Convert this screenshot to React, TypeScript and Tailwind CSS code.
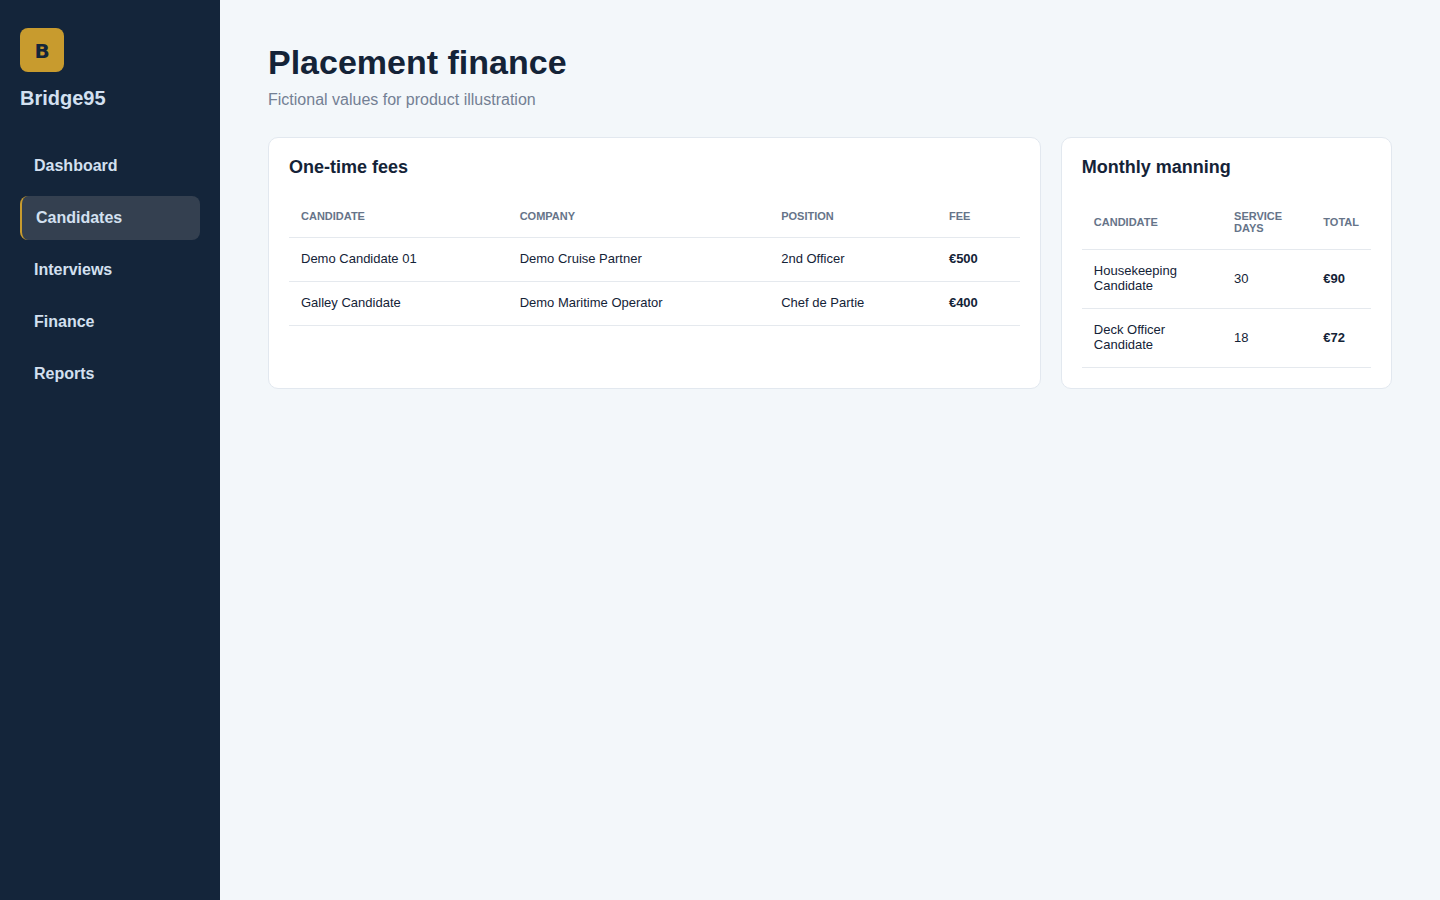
import type { ReactNode } from "react";

const navItems = ["Dashboard", "Candidates", "Interviews", "Finance", "Reports"];
const activeItem = "Candidates";

const feeColumns = ["Candidate", "Company", "Position", "Fee"];

const feeRows = [
  ["Demo Candidate 01", "Demo Cruise Partner", "2nd Officer", "€500"],
  ["Galley Candidate", "Demo Maritime Operator", "Chef de Partie", "€400"],
];

const manningColumns = ["Candidate", "Service days", "Total"];

const manningRows = [
  ["Housekeeping Candidate", "30", "€90"],
  ["Deck Officer Candidate", "18", "€72"],
];

function Card({ title, children }: { title: string; children: ReactNode }) {
  return (
    <section className="min-w-0 rounded-[10px] border border-[#e2e8ef] bg-white p-5">
      <h2 className="mb-5 text-[18px] leading-[19px] font-bold">{title}</h2>
      {children}
    </section>
  );
}

function DataTable({ label, columns, rows }: { label: string; columns: string[]; rows: string[][] }) {
  return (
    <table aria-label={label} className="w-full border-collapse text-left">
      <thead>
        <tr className="border-b border-[#e5e9ee]">
          {columns.map((column) => (
            <th
              key={column}
              scope="col"
              className="px-3 pt-[13px] pb-[15px] text-[11px] leading-3 font-bold text-[#667489] uppercase"
            >
              {column}
            </th>
          ))}
        </tr>
      </thead>
      <tbody>
        {rows.map((row) => (
          <tr key={row[0]} className="border-b border-[#e5e9ee]">
            {row.map((cell, index) => (
              <td key={columns[index]} className="px-3 pt-[13px] pb-[15px] text-[13px] leading-[15px]">
                {index === row.length - 1 ? <strong>{cell}</strong> : cell}
              </td>
            ))}
          </tr>
        ))}
      </tbody>
    </table>
  );
}

export default function App() {
  return (
    <div className="flex min-h-screen bg-[#f3f7fa] font-['Liberation_Sans',Arial,sans-serif] text-[#142337]">
      <aside className="w-[220px] shrink-0 bg-[#14253a] px-5 py-7 text-[#d3e0f0]">
        <div className="mb-[34px] flex flex-col gap-[14px]">
          <span className="flex size-11 items-center justify-center rounded-lg bg-[#c89b2e] pt-0.5 font-['DejaVu_Sans',sans-serif] text-[20px] leading-6 font-black text-[#14253a]">
            B
          </span>
          <strong className="text-[20px] leading-6">Bridge95</strong>
        </div>
        <nav aria-label="Main" className="flex flex-col gap-2">
          {navItems.map((item) => (
            <a
              key={item}
              href="#"
              aria-current={item === activeItem ? "page" : undefined}
              className={
                item === activeItem
                  ? "rounded-lg border-l-2 border-[#c89b2e] bg-[#344050] px-[14px] py-[13px] text-[16px] leading-[18px] font-bold"
                  : "rounded-lg px-[14px] py-[13px] text-[16px] leading-[18px] font-bold"
              }
            >
              {item}
            </a>
          ))}
        </nav>
      </aside>
      <main className="min-w-0 flex-1 px-12 py-[42px]">
        <header className="mb-7">
          <h1 className="text-[34px] leading-10 font-bold">Placement finance</h1>
          <p className="mt-2 text-[16px] leading-[19px] text-[#738094]">Fictional values for product illustration</p>
        </header>
        <div className="grid grid-cols-[7fr_3fr] gap-5">
          <Card title="One-time fees">
            <DataTable label="One-time fees" columns={feeColumns} rows={feeRows} />
          </Card>
          <Card title="Monthly manning">
            <DataTable label="Monthly manning" columns={manningColumns} rows={manningRows} />
          </Card>
        </div>
      </main>
    </div>
  );
}
